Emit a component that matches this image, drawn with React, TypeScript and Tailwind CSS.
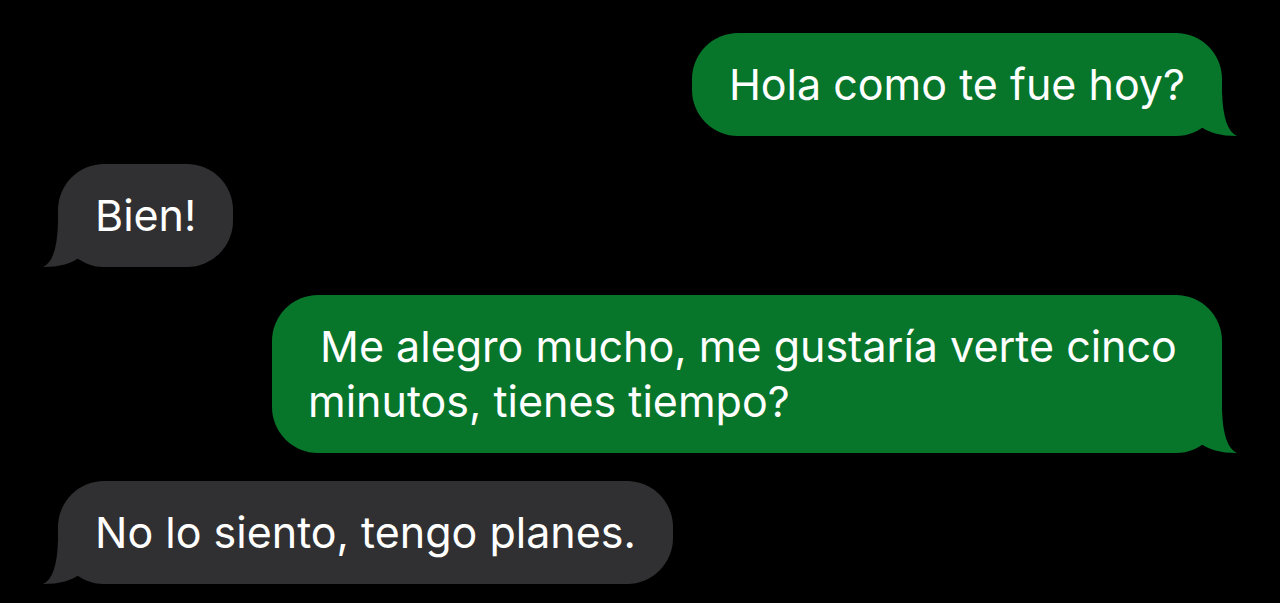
import type { ReactNode } from "react";

const GREEN = "#07752a";
const GRAY = "#303032";

function Tail({ side, color }: { side: "left" | "right"; color: string }) {
  return (
    <svg
      width="50"
      height="52"
      viewBox="0 0 50 52"
      className={
        side === "right"
          ? "absolute bottom-0 -right-[18px]"
          : "absolute bottom-0 -left-[18px] -scale-x-100"
      }
    >
      <path d="M10 42 Q22 52 47 52 Q33 46 32 8 L10 8 Z" fill={color} />
    </svg>
  );
}

function Bubble({ mine, wide, children }: { mine?: boolean; wide?: boolean; children: ReactNode }) {
  return (
    <div className={mine ? "flex justify-end" : "flex justify-start"}>
      <div
        className={`relative rounded-[46px] px-[37px] py-[24px] text-[43px] leading-[55px] text-white ${
          mine ? "bg-[#07752a]" : "bg-[#303032]"
        } ${wide ? "w-[950px] pl-[36px]" : ""}`}
      >
        <span className="relative z-10">{children}</span>
        <Tail side={mine ? "right" : "left"} color={mine ? GREEN : GRAY} />
      </div>
    </div>
  );
}

export default function App() {
  return (
    <div
      className="h-[603px] w-[1280px] overflow-hidden bg-black px-[58px] pt-[33px]"
      style={{ fontFamily: "Inter, 'Noto Sans', sans-serif" }}
    >
      <div className="flex flex-col gap-[28px]">
        <Bubble mine>Hola como te fue hoy?</Bubble>
        <Bubble>Bien!</Bubble>
        <Bubble mine wide>
          &nbsp;Me alegro mucho, me gustaría verte cinco
          <br />
          minutos, tienes tiempo?
        </Bubble>
        <Bubble>No lo siento, tengo planes.</Bubble>
      </div>
    </div>
  );
}
